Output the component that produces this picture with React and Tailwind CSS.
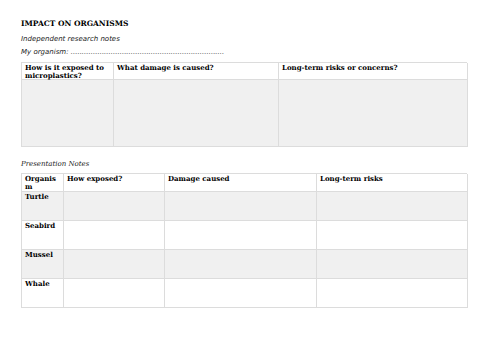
const serif = "font-['DejaVu_Serif',serif]"

function Cell({ children, shaded, className = '' }) {
  return (
    <div
      className={`border-r border-b border-[#dcdcdc] px-[3px] pt-[1px] font-bold leading-[8px] text-[7px] text-black break-words min-w-0 ${serif} ${shaded ? 'bg-[#f0f0f0]' : 'bg-white'} ${className}`}
    >
      {children}
    </div>
  )
}

export default function App() {
  const organisms = ['Turtle', 'Seabird', 'Mussel', 'Whale']
  return (
    <div className="w-[500px] h-[353px] bg-white pl-[21px] pt-[19px]">
      <div className={`${serif} font-bold text-[7.5px] leading-[10px] text-black`}>IMPACT ON ORGANISMS</div>
      <div className="mt-[5px] font-['DejaVu_Sans',sans-serif] italic text-[7px] leading-[10px] text-[#222]">
        Independent research notes
      </div>
      <div className="mt-[3px] font-['DejaVu_Sans',sans-serif] italic text-[7px] leading-[10px] text-[#222] whitespace-nowrap">
        My organism: .....................................................................
      </div>

      <div className="mt-[5px] w-[446px] grid grid-cols-[92px_165px_189px] grid-rows-[17px_67px] border-t border-l border-[#dcdcdc]">
        <Cell>How is it exposed to microplastics?</Cell>
        <Cell>What damage is caused?</Cell>
        <Cell>Long-term risks or concerns?</Cell>
        <Cell shaded />
        <Cell shaded />
        <Cell shaded />
      </div>

      <div className={`mt-[12px] ${serif} italic text-[7px] leading-[10px] text-[#222]`}>Presentation Notes</div>

      <div className="mt-[4px] w-[446px] grid grid-cols-[42px_101px_152px_151px] grid-rows-[18px_29px_29px_29px_29px] border-t border-l border-[#dcdcdc]">
        <Cell>Organism</Cell>
        <Cell>How exposed?</Cell>
        <Cell>Damage caused</Cell>
        <Cell>Long-term risks</Cell>
        {organisms.map((o, i) => (
          <div key={o} className="contents">
            <Cell shaded={i % 2 === 0}>{o}</Cell>
            <Cell shaded={i % 2 === 0} />
            <Cell shaded={i % 2 === 0} />
            <Cell shaded={i % 2 === 0} />
          </div>
        ))}
      </div>
    </div>
  )
}
